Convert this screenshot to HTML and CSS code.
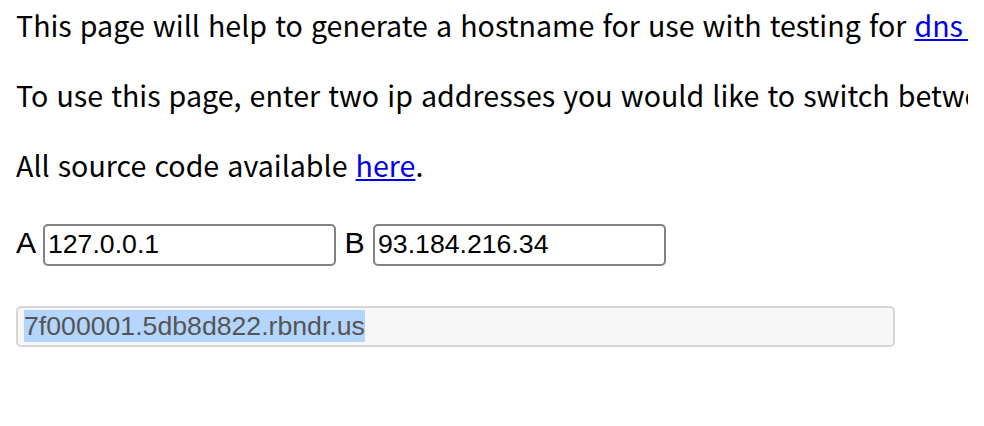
FILE: index.html
```html
<!DOCTYPE html>
<html lang="en">
<head>
<meta charset="utf-8">
<title>rbndr</title>
<link rel="stylesheet" href="styles.css">
</head>
<body>
<p class="intro">This page will help to generate a hostname for use with testing for <a href="#">dns rebinding</a> vulnerabilities in software.</p>
<p class="intro">To use this page, enter two ip addresses you would like to switch between. The hostname generated will resolve randomly to one of the addresses specified with a very low ttl.</p>
<p class="intro">All source code available <a href="#">here</a>.</p>
<div class="row">A <input class="ip" type="text" value="127.0.0.1"> B <input class="ip" type="text" value="93.184.216.34"></div>
<div class="result"><span class="sel">7f000001.5db8d822.rbndr.us</span></div>
</body>
</html>
```
FILE: styles.css
```css
html {
  overflow: hidden;
  background: #ffffff;
}
body {
  margin: 6px 16px 0;
  color: #000000;
  font-family: "Liberation Sans", Arial, sans-serif;
}
.intro {
  margin: 0 0 32px;
  font-family: "Noto Sans CJK KR", "Noto Sans", sans-serif;
  font-size: 28.6px;
  line-height: 38px;
  word-spacing: 1.7px;
  white-space: nowrap;
}
.intro a {
  color: #0000ee;
  text-decoration: underline;
  text-decoration-thickness: 2px;
  text-underline-offset: 2px;
}
.row {
  margin-top: 38px;
  font-family: "Liberation Sans", Arial, sans-serif;
  font-size: 30.3px;
  line-height: 42px;
  white-space: nowrap;
}
.ip {
  box-sizing: border-box;
  width: 293px;
  height: 42px;
  margin: 0;
  padding: 0 3px;
  border: 2px solid #828282;
  border-radius: 5px;
  background: #ffffff;
  color: #000000;
  font-family: "Liberation Sans", Arial, sans-serif;
  font-size: 26.67px;
  outline: none;
}
.result {
  box-sizing: border-box;
  display: flex;
  align-items: center;
  width: 879px;
  height: 41px;
  margin-top: 40px;
  padding: 0 6px;
  border: 2px solid #d6d6d6;
  border-radius: 5px;
  background: #f7f7f7;
  color: #555555;
  font-family: "Liberation Sans", Arial, sans-serif;
  font-size: 26.67px;
}
.sel {
  display: inline-block;
  line-height: 32px;
  background: #b4d5fe;
}
```
